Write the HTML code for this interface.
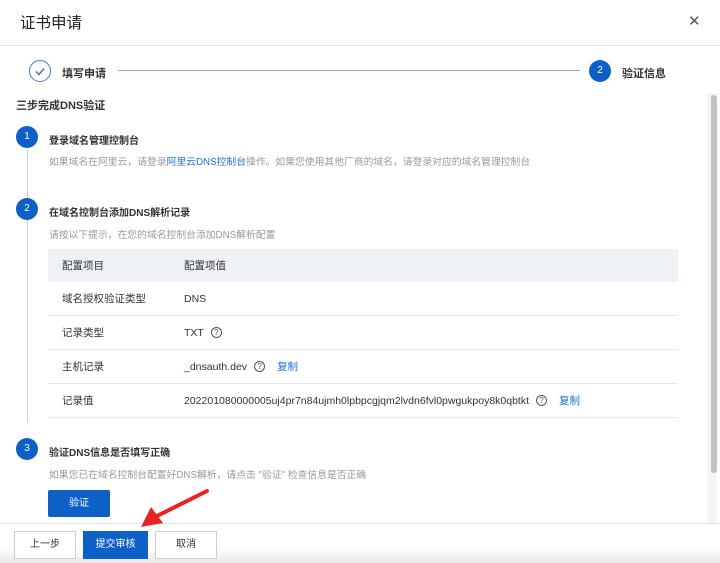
<!DOCTYPE html><html><head><meta charset="utf-8"><style>
*{margin:0;padding:0;box-sizing:border-box}
body{width:720px;height:563px;overflow:hidden;background:#fff;font-family:"Liberation Sans","Noto Sans CJK SC",sans-serif;color:#333;position:relative}
.a{position:absolute;white-space:nowrap}
.c{position:absolute;width:22px;height:22px;border-radius:50%;background:#0d61c6;color:#fff;font-size:10px;text-align:center;line-height:22px}
.t{font-size:10px;color:#333;font-weight:bold}
.g{font-size:9.8px;color:#999}
.row{position:absolute;left:48px;width:630px;height:34px;border-bottom:1px solid #e8e8e8;font-size:10.5px;color:#333}
.row span{position:absolute;top:0;height:33px;display:flex;align-items:center;white-space:nowrap}
.q{display:inline-block;width:11px;height:11px;border:1px solid #555;border-radius:50%;font-size:8px;line-height:9px;text-align:center;margin-left:7px;color:#555;font-style:normal}
.lk{color:#1f6fd6}
.btn{position:absolute;height:28px;border:1px solid #ccc;background:#fff;font-size:10px;text-align:center;line-height:26px}
</style></head><body>
<div class="a" style="left:20px;top:11px;font-size:15.5px;color:#222">证书申请</div>
<div class="a" style="left:688px;top:12px;font-size:15px;color:#555">✕</div>
<div class="a" style="left:0;top:45px;width:720px;height:1px;background:#e6e6e6"></div>
<div class="a" style="left:29px;top:60px;width:22px;height:22px;border:1.5px solid #4a78b8;border-radius:50%"></div>
<svg class="a" style="left:29px;top:60px" width="22" height="22"><path d="M7 11.5l3 3 5-6" stroke="#4a78b8" stroke-width="1.5" fill="none"/></svg>
<div class="a t" style="left:62px;top:65px;font-size:11px">填写申请</div>
<div class="a" style="left:118px;top:70px;width:462px;height:1px;background:#8fa8cc"></div>
<div class="c" style="left:589px;top:60px">2</div>
<div class="a t" style="left:622px;top:65px;font-size:11px">验证信息</div>
<div class="a t" style="left:16px;top:97px;font-size:11px">三步完成DNS验证</div>
<div class="a" style="left:27px;top:150px;width:1px;height:272px;background:#ccc"></div>
<div class="c" style="left:16px;top:126px">1</div>
<div class="a t" style="left:49px;top:132px">登录域名管理控制台</div>
<div class="a g" style="left:49px;top:154px">如果域名在阿里云，请登录<span class="lk">阿里云DNS控制台</span>操作。如果您使用其他厂商的域名，请登录对应的域名管理控制台</div>
<div class="c" style="left:16px;top:198px">2</div>
<div class="a t" style="left:49px;top:204px">在域名控制台添加DNS解析记录</div>
<div class="a g" style="left:49px;top:227px">请按以下提示，在您的域名控制台添加DNS解析配置</div>
<div class="row" style="top:249px;height:33px;background:#eef1f6;border:none"><span style="left:14px">配置项目</span><span style="left:136px">配置项值</span></div>
<div class="row" style="top:282px"><span style="left:14px">域名授权验证类型</span><span style="left:136px">DNS</span></div>
<div class="row" style="top:316px"><span style="left:14px">记录类型</span><span style="left:136px">TXT<i class="q">?</i></span></div>
<div class="row" style="top:350px"><span style="left:14px">主机记录</span><span style="left:136px">_dnsauth.dev<i class="q">?</i><b class="lk" style="font-weight:normal;margin-left:12px">复制</b></span></div>
<div class="row" style="top:384px"><span style="left:14px">记录值</span><span style="left:136px">202201080000005uj4pr7n84ujmh0lpbpcgjqm2lvdn6fvl0pwgukpoy8k0qbtkt<i class="q">?</i><b class="lk" style="font-weight:normal;margin-left:12px">复制</b></span></div>
<div class="c" style="left:16px;top:438px">3</div>
<div class="a t" style="left:49px;top:444px">验证DNS信息是否填写正确</div>
<div class="a g" style="left:49px;top:467px">如果您已在域名控制台配置好DNS解析，请点击 "验证" 检查信息是否正确</div>
<div class="a" style="left:48px;top:490px;width:62px;height:27px;background:#0d61c6;color:#fff;font-size:10px;text-align:center;line-height:27px;border-radius:2px">验证</div>
<div class="a" style="left:707px;top:93px;width:10px;height:430px;background:#f4f4f4"></div>
<div class="a" style="left:711px;top:95px;width:6px;height:378px;background:#c2c2c2;border-radius:3px"></div>
<div class="a" style="left:0;top:523px;width:720px;height:40px;background:linear-gradient(#fff,#fff 60%,#e8e8e8);border-top:1px solid #e0e0e0"></div>
<div class="btn" style="left:14px;top:531px;width:62px">上一步</div>
<div class="btn" style="left:83px;top:531px;width:65px;background:#0d61c6;border-color:#0d61c6;color:#fff">提交审核</div>
<div class="btn" style="left:155px;top:531px;width:62px">取消</div>
<svg class="a" style="left:135px;top:485px" width="80" height="50"><path d="M72 6L20 32" stroke="#e82323" stroke-width="4" stroke-linecap="round"/><path d="M6 42L16 22L28 38Z" fill="#e82323"/></svg>
</body></html>
